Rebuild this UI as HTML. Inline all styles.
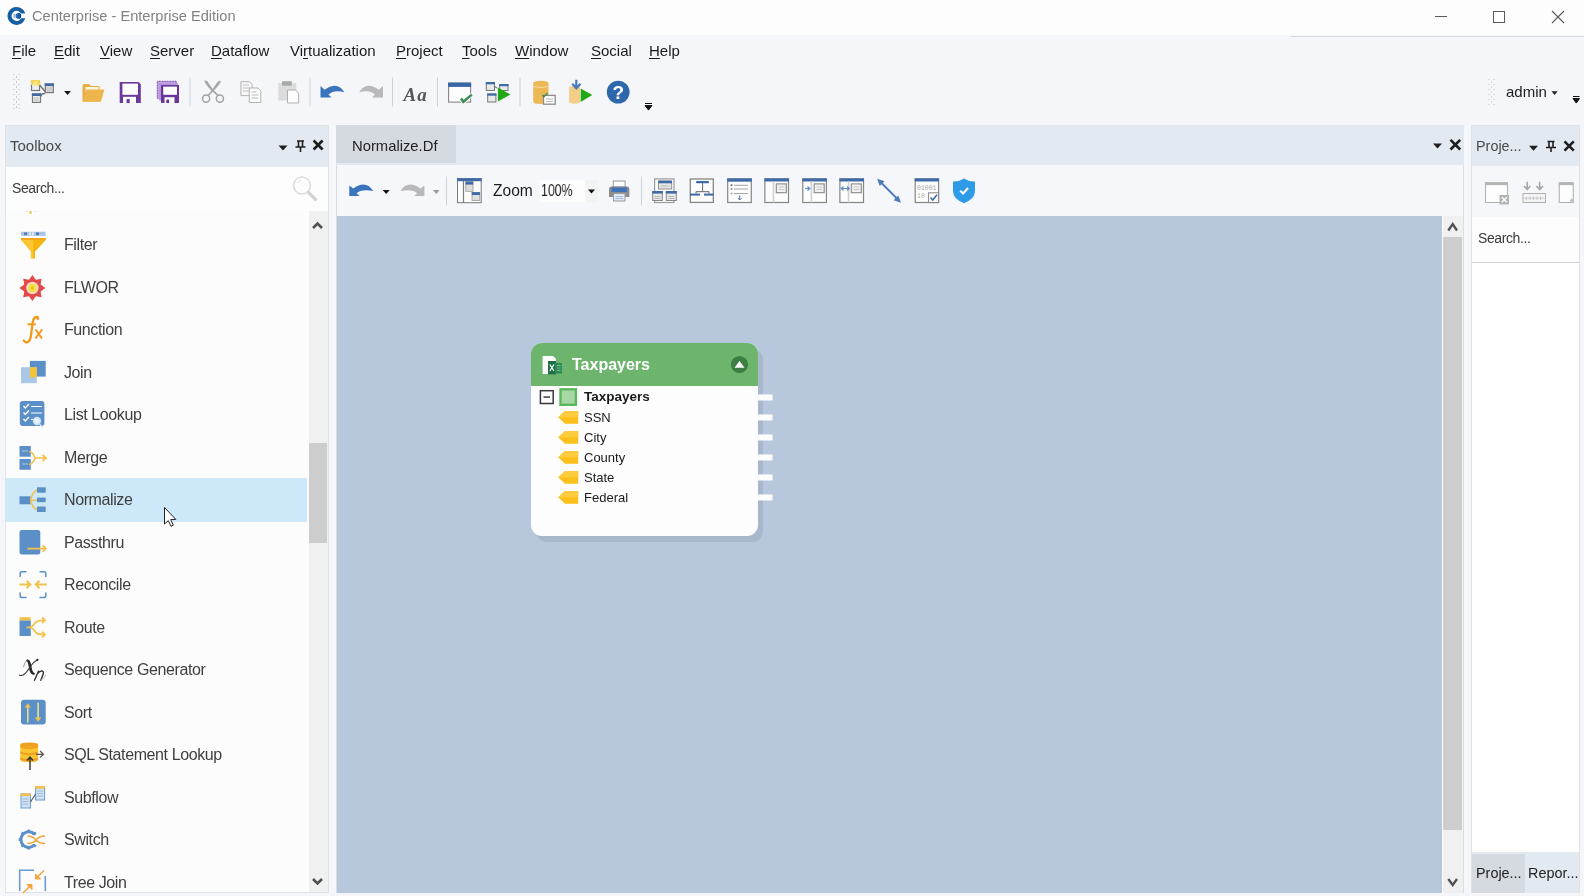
<!DOCTYPE html>
<html><head><meta charset="utf-8">
<style>
*{box-sizing:border-box;margin:0;padding:0}
html,body{width:1584px;height:896px;overflow:hidden}
body{position:relative;background:#f4f6f9;font-family:"Liberation Sans",sans-serif;color:#1e1e1e}
.a{position:absolute}
.t{position:absolute;white-space:nowrap;line-height:1;will-change:transform}
#title{left:0;top:0;width:1584px;height:35px;background:#fdfdfd}
.menu span{will-change:transform;position:absolute;top:43px;font-size:15px;color:#1a1a1a;line-height:1}
.menu u{text-decoration:underline;text-decoration-thickness:1px;text-underline-offset:2px}
.sep{position:absolute;width:1px;background:#c9ced6}
.li{will-change:transform;position:absolute;left:64px;font-size:16px;letter-spacing:-0.4px;color:#404040;line-height:1}
.ic{position:absolute}
</style></head><body>
<!-- title bar -->
<div id="title" class="a"></div>
<div class="a" style="left:1290px;top:36px;width:294px;height:1px;background:#d9dee5"></div>
<svg class="ic" style="left:4px;top:4px" width="26" height="24" viewBox="4 4 26 24">
  <path d="M25.2 13.6 A9 9 0 1 0 25.2 18.2 H21.2 A5.1 5.1 0 1 1 21.2 13.6 Z" fill="#155fa3"/>
  <circle cx="18.4" cy="15.9" r="2.8" fill="#1f6fb8"/>
  <path d="M18.4 13.1 A2.8 2.8 0 0 1 18.4 18.7 Z" fill="#0f4f92"/>
  <rect x="13.6" y="13.8" width="1.6" height="4" fill="#8ea9c8"/>
</svg>
<div class="t" style="left:32px;top:9px;font-size:14.6px;color:#828282">Centerprise - Enterprise Edition</div>
<!-- window controls -->
<div class="a" style="left:1435px;top:16px;width:12px;height:1px;background:#5a5a5a"></div>
<div class="a" style="left:1493px;top:11px;width:12px;height:12px;border:1px solid #5a5a5a"></div>
<svg class="ic" style="left:1551px;top:10px" width="14" height="14" viewBox="0 0 14 14"><path d="M1 1L13 13M13 1L1 13" stroke="#5a5a5a" stroke-width="1.1"/></svg>

<!-- menu -->
<div class="menu">
<span style="left:12px"><u>F</u>ile</span>
<span style="left:54px"><u>E</u>dit</span>
<span style="left:100px"><u>V</u>iew</span>
<span style="left:150px"><u>S</u>erver</span>
<span style="left:211px"><u>D</u>ataflow</span>
<span style="left:290px">Vi<u>r</u>tualization</span>
<span style="left:396px"><u>P</u>roject</span>
<span style="left:462px"><u>T</u>ools</span>
<span style="left:515px"><u>W</u>indow</span>
<span style="left:591px"><u>S</u>ocial</span>
<span style="left:649px"><u>H</u>elp</span>
</div>

<!-- main toolbar placeholder -->
<div id="tb"></div>
<div class="t" style="left:1506px;top:84px;font-size:15px;color:#222">admin</div>


<!-- Toolbox panel -->
<div class="a" style="left:5px;top:125px;width:324px;height:768px;background:#fcfcfc;border:1px solid #dfe3e8"></div>
<div class="a" style="left:6px;top:126px;width:322px;height:41px;background:#e2e9f1"></div>
<div class="t" style="left:10px;top:138px;font-size:15px;color:#4a4a4a">Toolbox</div>
<div class="a" style="left:6px;top:167px;width:322px;height:44px;background:#fdfdfd"></div>
<div class="t" style="left:12px;top:181px;font-size:14px;letter-spacing:-0.4px;color:#3a3a3a">Search...</div>

<!-- toolbox scrollbar -->
<div class="a" style="left:309px;top:211px;width:19px;height:681px;background:#f0f0f0"></div>
<div class="a" style="left:309px;top:443px;width:18px;height:100px;background:#cdcdcd"></div>

<!-- selection -->
<div class="a" style="left:6px;top:478px;width:301px;height:44px;background:#cde8f8"></div>

<div id="list">
<div class="li" style="top:237px">Filter</div>
<div class="li" style="top:280px">FLWOR</div>
<div class="li" style="top:322px">Function</div>
<div class="li" style="top:365px">Join</div>
<div class="li" style="top:407px">List Lookup</div>
<div class="li" style="top:450px">Merge</div>
<div class="li" style="top:492px">Normalize</div>
<div class="li" style="top:535px">Passthru</div>
<div class="li" style="top:577px">Reconcile</div>
<div class="li" style="top:620px">Route</div>
<div class="li" style="top:662px">Sequence Generator</div>
<div class="li" style="top:705px">Sort</div>
<div class="li" style="top:747px">SQL Statement Lookup</div>
<div class="li" style="top:790px">Subflow</div>
<div class="li" style="top:832px">Switch</div>
<div class="li" style="top:875px">Tree Join</div>
</div>

<!-- Document area -->
<div class="a" style="left:336px;top:125px;width:1128px;height:40px;background:#e3e9f0"></div>
<div class="a" style="left:336px;top:125px;width:120px;height:38px;background:#d5dae1"></div>
<div class="t" style="left:352px;top:139px;font-size:14.8px;color:#222">Normalize.Df</div>
<div class="a" style="left:336px;top:165px;width:1128px;height:728px;background:#f5f7fa;border-left:1px solid #d9dde3"></div>
<div class="a" style="left:337px;top:216px;width:1105px;height:677px;background:#b8c8dc"></div>
<div class="a" style="left:1442px;top:216px;width:1px;height:677px;background:#fff"></div>
<div class="a" style="left:1443px;top:216px;width:20px;height:677px;background:#f0f0f0"></div>
<div class="a" style="left:1463px;top:165px;width:1px;height:728px;background:#dadfe5"></div>
<div class="a" style="left:1443px;top:237px;width:19px;height:593px;background:#cdcdcd"></div>
<div class="t" style="left:493px;top:183px;font-size:15.6px;color:#1e1e1e">Zoom</div>
<div class="a" style="left:540px;top:180px;width:58px;height:22px;background:#fdfdfd"></div>
<div class="a" style="left:585px;top:180px;width:13px;height:22px;background:#f3f3f3"></div>
<div class="t" style="left:541px;top:183px;font-size:15.6px;color:#1e1e1e;transform:scaleX(0.79);transform-origin:0 0">100%</div>

<!-- Right panel -->
<div class="a" style="left:1471px;top:125px;width:109px;height:768px;background:#f5f7fa;border:1px solid #dfe3e8"></div>
<div class="a" style="left:1472px;top:126px;width:107px;height:40px;background:#e2e9f1"></div>
<div class="t" style="left:1476px;top:139px;font-size:14.4px;color:#4a4a4a">Proje...</div>
<div class="a" style="left:1472px;top:217px;width:107px;height:45px;background:#fdfdfd"></div>
<div class="a" style="left:1472px;top:262px;width:107px;height:1px;background:#d0d0d0"></div>
<div class="a" style="left:1472px;top:263px;width:107px;height:589px;background:#fff"></div>
<div class="t" style="left:1478px;top:231px;font-size:14px;letter-spacing:-0.4px;color:#3a3a3a">Search...</div>
<div class="a" style="left:1472px;top:852px;width:107px;height:41px;background:#e3e9f0"></div>
<div class="a" style="left:1472px;top:854px;width:53px;height:39px;background:#d5dae1"></div>
<div class="t" style="left:1476px;top:866px;font-size:14.4px;color:#222">Proje...</div>
<div class="t" style="left:1528px;top:866px;font-size:14.4px;color:#222">Repor...</div>

<!-- Node -->
<div class="a" style="left:536px;top:349px;width:227px;height:193px;border-radius:11px;background:#a8b7cb"></div>
<div class="a" style="left:531px;top:343px;width:227px;height:193px;border-radius:11px;background:#fdfdfd;overflow:hidden">
  <div class="a" style="left:0;top:0;width:227px;height:43px;background:#6db56d"></div>
</div>
<div class="t" style="left:572px;top:357px;font-size:16px;font-weight:bold;color:#fff">Taxpayers</div>
<div class="t" style="left:584px;top:390px;font-size:13.5px;font-weight:bold;color:#1a1a1a">Taxpayers</div>
<div class="t" style="left:584px;top:411px;font-size:13px;color:#1a1a1a">SSN</div>
<div class="t" style="left:584px;top:431px;font-size:13px;color:#1a1a1a">City</div>
<div class="t" style="left:584px;top:451px;font-size:13px;color:#1a1a1a">County</div>
<div class="t" style="left:584px;top:471px;font-size:13px;color:#1a1a1a">State</div>
<div class="t" style="left:584px;top:491px;font-size:13px;color:#1a1a1a">Federal</div>
<svg id="ov" class="a" style="left:0;top:0;z-index:5" width="1584" height="896" viewBox="0 0 1584 896">
<!-- ===== main toolbar ===== -->
<g fill="#b9bec6">
<rect x="13.5" y="74" width="1" height="1"/><rect x="18.5" y="74" width="1" height="1"/>
<rect x="16" y="76.5" width="1" height="1" fill="#9aa0a8"/>
<rect x="13.5" y="79" width="1" height="1"/><rect x="18.5" y="79" width="1" height="1"/>
<rect x="16" y="81.5" width="1" height="1" fill="#9aa0a8"/>
<rect x="13.5" y="84" width="1" height="1"/><rect x="18.5" y="84" width="1" height="1"/>
<rect x="16" y="86.5" width="1" height="1" fill="#9aa0a8"/>
<rect x="13.5" y="89" width="1" height="1"/><rect x="18.5" y="89" width="1" height="1"/>
<rect x="16" y="91.5" width="1" height="1" fill="#9aa0a8"/>
<rect x="13.5" y="94" width="1" height="1"/><rect x="18.5" y="94" width="1" height="1"/>
<rect x="16" y="96.5" width="1" height="1" fill="#9aa0a8"/>
<rect x="13.5" y="99" width="1" height="1"/><rect x="18.5" y="99" width="1" height="1"/>
<rect x="16" y="101.5" width="1" height="1" fill="#9aa0a8"/>
<rect x="13.5" y="104" width="1" height="1"/><rect x="18.5" y="104" width="1" height="1"/>
<rect x="16" y="106.5" width="1" height="1" fill="#9aa0a8"/>
<rect x="13.5" y="108" width="1" height="1"/><rect x="18.5" y="108" width="1" height="1"/>
</g>
<!-- new dataflow icon -->
<path d="M39.5 85 L46 92.5 M40 97 L42 94 L45 93.5" stroke="#777" stroke-width="1.6" fill="none"/>
<rect x="31.5" y="81.5" width="8" height="9" fill="#eee" stroke="#7a7a7a" stroke-width="1.2"/>
<path d="M31 80 h9 v5 h-9z" fill="#f2d55a"/>
<circle cx="35.5" cy="83.5" r="2.5" fill="#fbe77a"/>
<rect x="45.3" y="84" width="8" height="8.6" fill="#d8d8d8" stroke="#7a7a7a" stroke-width="1.2"/>
<rect x="44.7" y="83.4" width="9.2" height="2.6" fill="#3e6aa6"/>
<rect x="46.3" y="87.5" width="6" height="4" fill="#cfcfcf"/>
<rect x="32.5" y="94" width="8" height="8.4" fill="#eee" stroke="#7a7a7a" stroke-width="1.2"/>
<rect x="31.9" y="93.4" width="9.2" height="2.6" fill="#3e6aa6"/>
<rect x="34" y="97.5" width="5" height="1" fill="#bbb"/><rect x="34" y="99.5" width="5" height="1" fill="#bbb"/>
<path d="M64.2 91 h6.7 l-3.35 4z" fill="#111"/>
<!-- folder -->
<path d="M82.5 101.5 V85.5 Q82.5 84 84 84 H89 L91 86 H99.5 V101.5 Z" fill="#e7ad45"/>
<path d="M85.5 87 H98.5 V92 H85.5Z" fill="#fbf3dc"/>
<path d="M82.5 101.7 L86.3 89.5 H104.4 L100.9 101.7 Z" fill="#edb64c"/>
<!-- save -->
<path d="M119.7 81.9 H138.5 L140.8 84.2 V103.1 H119.7Z" fill="#6c3899"/>
<rect x="122.4" y="83.6" width="15.6" height="11.2" fill="#fdfcff"/>
<rect x="123" y="96.8" width="13" height="6.3" fill="#fdfcff"/>
<rect x="126.6" y="99" width="3.1" height="4.1" fill="#6c3899"/>
<!-- save all -->
<rect x="157.3" y="81.3" width="19" height="17" fill="#c3a6e2" stroke="#6f3d9e" stroke-width="1" stroke-dasharray="1 0.6"/>
<rect x="159" y="83" width="19" height="17.5" fill="#b995dd"/>
<rect x="161" y="85" width="18" height="18" fill="#6a3598"/>
<rect x="163.2" y="86.6" width="13.8" height="8.2" fill="#fdfcff"/>
<rect x="164.5" y="97.2" width="10" height="5.8" fill="#fdfcff"/>
<rect x="166.3" y="99.6" width="2.8" height="3.4" fill="#6a3598"/>
<!-- separators -->
<rect x="189.5" y="77.5" width="1" height="29" fill="#cdd1d8"/>
<rect x="309.5" y="77.5" width="1" height="29" fill="#cdd1d8"/>
<rect x="392" y="77.5" width="1" height="29" fill="#cdd1d8"/>
<rect x="437" y="77.5" width="1" height="29" fill="#cdd1d8"/>
<rect x="519.5" y="77.5" width="1" height="29" fill="#cdd1d8"/>
<!-- scissors -->
<path d="M204.3 80.6 Q206 80 207.5 81.5 L213 89.5 L218.6 95 L217.6 96.2 L211.8 91 Q205 84 204.3 80.6Z" fill="#a3a3a3"/>
<path d="M220.9 80.9 Q219.2 80.3 217.7 81.8 L212.2 89.5 L207.6 95 L208.6 96.2 L213.4 91 Q220.2 84 220.9 80.9Z" fill="#a8a8a8"/>
<circle cx="206.1" cy="98.6" r="3.6" fill="none" stroke="#a3a3a3" stroke-width="1.5"/>
<circle cx="219.9" cy="98.6" r="3.6" fill="none" stroke="#a3a3a3" stroke-width="1.5"/>
<!-- copy -->
<path d="M240.9 81.7 H249.5 L252.2 84.4 V95.6 H240.9Z" fill="#f6f6f6" stroke="#b3b3b3" stroke-width="1"/>
<path d="M243 85 h6 M243 88 h7 M243 91 h7" stroke="#c2c2c2" stroke-width="1"/>
<path d="M249.3 88 H258 L260.8 90.8 V102.5 H249.3Z" fill="#fdfdfd" stroke="#b3b3b3" stroke-width="1"/>
<path d="M251.5 92 h5 M251.5 95 h7 M251.5 98 h7" stroke="#b8b8b8" stroke-width="1"/>
<!-- paste -->
<rect x="278.3" y="83" width="18" height="17.6" fill="#dcdcdc"/>
<rect x="282" y="81.2" width="9.8" height="4.5" fill="#a9a9a9"/>
<path d="M287.5 90 H295.5 L298.6 93.1 V103 H287.5Z" fill="#fdfdfd" stroke="#b0b0b0" stroke-width="1"/>
<!-- undo / redo -->
<path d="M320.5 86 V97.6 H331.6 L328.4 94.6 Q334 89.2 344.4 92.2 Q337.5 80.5 324.6 89.8 Z" fill="#3a74bd"/>
<path d="M383 86 V97.6 H371.9 L375.1 94.6 Q369.5 89.2 359.1 92.2 Q366 80.5 378.9 89.8 Z" fill="#b9b9b9"/>
<!-- Aa -->
<text x="403.5" y="100.8" font-family="Liberation Serif" font-style="italic" font-weight="bold" font-size="19" fill="#585858" letter-spacing="1">Aa</text>
<!-- window check -->
<rect x="448.6" y="83.1" width="22" height="19" fill="#fdfdfd" stroke="#858585" stroke-width="1.1"/>
<rect x="448.1" y="82.6" width="23" height="4.3" fill="#3866a6"/>
<path d="M461 98.5 L463.3 101.8 L471.8 94.6" stroke="#fdfdfd" stroke-width="4.5" fill="none"/>
<path d="M461 98.5 L463.3 101.8 L471.8 94.6" stroke="#3d8c57" stroke-width="2.5" fill="none"/>
<!-- run -->
<rect x="486.3" y="82.6" width="8.2" height="7.8" fill="#e9e9e9" stroke="#777" stroke-width="1"/>
<rect x="485.8" y="82.1" width="9.2" height="2.2" fill="#3e6aa6"/>
<rect x="499.7" y="84.5" width="8.3" height="6" fill="#e9e9e9" stroke="#777" stroke-width="1"/>
<rect x="499.2" y="84" width="9.3" height="2.2" fill="#3e6aa6"/>
<rect x="487.7" y="94" width="8.2" height="8" fill="#e9e9e9" stroke="#777" stroke-width="1"/>
<rect x="487.2" y="93.5" width="9.2" height="2.2" fill="#3e6aa6"/>
<path d="M494.5 86.5 L497 88" stroke="#777" stroke-width="1.2"/>
<path d="M497.9 87.6 V101.5 L510.4 94.4Z" fill="#22a814"/>
<!-- db window -->
<path d="M533.2 83.5 Q533.2 80.8 540.8 80.8 Q548.5 80.8 548.5 83.5 V101.5 Q548.5 104 540.8 104 Q533.2 104 533.2 101.5Z" fill="#edb957"/>
<path d="M533.5 86.5 Q540.8 88.5 548.2 86.5" stroke="#f8dca0" stroke-width="1" fill="none"/>
<rect x="543.5" y="95.4" width="11.7" height="8.8" fill="#fdfdfd" stroke="#8c8c8c" stroke-width="1.3"/>
<path d="M546 99 h7 M546 101.5 h7" stroke="#bbb" stroke-width="1"/>
<path d="M542.5 95 L544 96.8 L547.5 93" stroke="#3d8c57" stroke-width="1.3" fill="none"/>
<!-- db run -->
<path d="M569.1 88 Q569.1 85.8 574.5 85.8 Q580 85.8 580 88 V101.5 Q580 103.5 574.5 103.5 Q569.1 103.5 569.1 101.5Z" fill="#f2ce86"/>
<path d="M576.3 79.7 V87 M572.3 83.8 L576.3 88.3 L580.5 83.8" stroke="#4878bd" stroke-width="2.2" fill="none"/>
<path d="M580.7 88.5 V102 L592.3 95.1Z" fill="#22a814"/>
<!-- help -->
<circle cx="618.2" cy="92.1" r="11.4" fill="#2f67ad"/>
<text x="618.2" y="99.2" text-anchor="middle" font-family="Liberation Sans" font-weight="bold" font-size="19" fill="#fff">?</text>
<!-- overflow -->
<path d="M645 103.5 h7 M645 105.6 h7 l-3.5 4.5z" stroke="#111" stroke-width="1" fill="#111"/>
<!-- right grip + admin -->
<g fill="#c2c6cc">
<rect x="1488.5" y="79" width="1" height="1"/><rect x="1493.5" y="79" width="1" height="1"/>
<rect x="1491" y="81.5" width="1" height="1"/>
<rect x="1488.5" y="84" width="1" height="1"/><rect x="1493.5" y="84" width="1" height="1"/>
<rect x="1491" y="86.5" width="1" height="1"/>
<rect x="1488.5" y="89" width="1" height="1"/><rect x="1493.5" y="89" width="1" height="1"/>
<rect x="1491" y="91.5" width="1" height="1"/>
<rect x="1488.5" y="94" width="1" height="1"/><rect x="1493.5" y="94" width="1" height="1"/>
<rect x="1491" y="96.5" width="1" height="1"/>
<rect x="1488.5" y="99" width="1" height="1"/><rect x="1493.5" y="99" width="1" height="1"/>
<rect x="1491" y="101.5" width="1" height="1"/>
<rect x="1488.5" y="104" width="1" height="1"/><rect x="1493.5" y="104" width="1" height="1"/>
</g>
<path d="M1551.5 91.2 h6.2 l-3.1 3.8z" fill="#222"/>
<path d="M1573 96.5 h6.5 M1573 98.6 h6.5 l-3.25 4.5z" stroke="#111" stroke-width="1" fill="#111"/>
<!-- ===== toolbox icons ===== -->
<!-- partial icon at top -->
<rect x="29.5" y="211" width="2" height="3" fill="#e8c64a"/>
<rect x="26" y="211" width="1" height="1" fill="#c9d6e6"/><rect x="35" y="211" width="1" height="1" fill="#c9d6e6"/>
<!-- Filter -->
<g>
<rect x="21" y="231.8" width="24.6" height="4" fill="#a9c4e2"/>
<rect x="24" y="232.4" width="3" height="2.8" fill="#4f7fba"/><rect x="36" y="232.4" width="3" height="2.8" fill="#4f7fba"/>
<rect x="29.5" y="232.4" width="1.2" height="2.8" fill="#fff"/><rect x="32.3" y="232.4" width="1.2" height="2.8" fill="#fff"/>
<path d="M21 238 H45.6 V240 L35 251.5 V258.5 H30.8 V251.5 L21 240Z" fill="#fac532"/>
<path d="M33.3 238 H45.6 V240 L35 251.5 V258.5 H33.3Z" fill="#f6b40f"/>
<path d="M21 238 H45.6 V240 H21Z" fill="#f2a81a"/>
</g>
<!-- FLWOR -->
<g transform="translate(32.4 288)">
<path d="M0,-13 L3.4,-8.2 L9.2,-9.2 L8.2,-3.4 L13,0 L8.2,3.4 L9.2,9.2 L3.4,8.2 L0,13 L-3.4,8.2 L-9.2,9.2 L-8.2,3.4 L-13,0 L-8.2,-3.4 L-9.2,-9.2 L-3.4,-8.2Z" fill="#e24a4a"/>
<circle r="6.2" fill="#f6d8c8"/>
<circle r="4.2" fill="#f7e23a"/>
<circle r="1.6" fill="#f0b830"/>
</g>
<!-- Function -->
<path d="M23.8 340.5 Q25.5 343.5 28.3 341.8 Q30.4 340.3 31 335 L32.8 322 Q33.8 316.8 37 317 Q38.6 317.3 37.7 319" stroke="#f39a1e" stroke-width="2.3" fill="none" stroke-linecap="round"/>
<path d="M27.5 324.3 H35.8" stroke="#f39a1e" stroke-width="2"/>
<path d="M36 330 L41.5 337.8 M41.8 330 L35.8 337.8" stroke="#f39a1e" stroke-width="2" stroke-linecap="round"/>
<!-- Join -->
<rect x="29.9" y="360.9" width="15.8" height="15.7" fill="#5b8fc7"/>
<rect x="21" y="367.2" width="15.8" height="16" fill="#a9c8e6"/>
<rect x="29.9" y="367.2" width="6.9" height="10.2" fill="#f5c338"/>
<!-- List Lookup -->
<rect x="19.8" y="400.9" width="24.6" height="25.2" rx="3" fill="#5b8fc7"/>
<path d="M23.5 406 L25.3 408 L29 404 M23.5 412.5 L25.3 414.5 L29 410.5 M23.5 419 L25.3 421 L29 417" stroke="#fff" stroke-width="1.4" fill="none"/>
<path d="M31 406.5 H42 M31 413 H42 M31 419.5 H33" stroke="#fff" stroke-width="1.2"/>
<circle cx="37" cy="421" r="4.2" fill="#cfe3f5"/>
<circle cx="37" cy="421" r="2.5" fill="#e9f3fb"/>
<path d="M39.5 424 L42.5 427" stroke="#cfe3f5" stroke-width="1.4"/>
<!-- Merge -->
<rect x="19.5" y="446" width="11.3" height="10.7" fill="#5b8fc7"/>
<rect x="19.5" y="459" width="11.3" height="10.75" fill="#5b8fc7"/>
<path d="M22 451 h6 M22 464 h6" stroke="#a9c8e6" stroke-width="1"/>
<path d="M29 451.5 Q33 452 35 458 Q33 464 29 464.5 M35 458 H45" stroke="#f2c14a" stroke-width="1.6" fill="none"/>
<path d="M42.5 455 L46.2 458 L42.5 461" stroke="#f2c14a" stroke-width="1.7" fill="none"/>
<!-- Normalize -->
<rect x="19.5" y="496.3" width="11" height="8" fill="#5b8fc7"/>
<rect x="37" y="487.3" width="8.7" height="5.4" fill="#5b8fc7"/>
<rect x="37" y="497.6" width="8.7" height="4.6" fill="#5b8fc7"/>
<rect x="37" y="506.5" width="8.7" height="5.5" fill="#5b8fc7"/>
<path d="M30.5 500.3 Q33 491 37 490 M30.5 500.3 H37 M30.5 500.3 Q33 509.5 37 509.3" stroke="#f2c14a" stroke-width="1.5" fill="none"/>
<!-- Passthru -->
<rect x="19.5" y="529.9" width="20.8" height="24.7" rx="2.5" fill="#5b8fc7"/>
<path d="M27.4 548.6 H45" stroke="#f2c14a" stroke-width="1.8"/>
<path d="M42.5 545.5 L46 548.6 L42.5 551.7" stroke="#f2c14a" stroke-width="1.8" fill="none"/>
<!-- Reconcile -->
<path d="M20.2 577 V573.5 Q20.2 571.8 22 571.8 H26.5 M39.5 571.8 H44 Q45.8 571.8 45.8 573.5 V577 M45.8 592.5 V595.8 Q45.8 597.6 44 597.6 H39.5 M26.5 597.6 H22 Q20.2 597.6 20.2 595.8 V592.5" stroke="#5b8fc7" stroke-width="1.5" fill="none"/>
<path d="M19.5 584.5 H30 M26.5 580.8 L30.3 584.5 L26.5 588.2 M46.6 584.5 H36 M39.5 580.8 L35.7 584.5 L39.5 588.2" stroke="#f2c14a" stroke-width="2" fill="none"/>
<!-- Route -->
<rect x="19.5" y="620.3" width="11.3" height="15.7" fill="#5b8fc7"/>
<rect x="19.5" y="617.2" width="11.3" height="3.1" fill="#f2c14a"/>
<path d="M26.5 627.4 H29.5 Q32 627.4 35 623 Q37 620.3 44 620.3 M29.5 627.4 Q32 627.4 35 631.5 Q37 634.6 44 634.6" stroke="#f2c14a" stroke-width="1.8" fill="none"/>
<path d="M42 617.5 L45 620.3 L42 623.1 M42 631.8 L45 634.6 L42 637.4" stroke="#f2c14a" stroke-width="1.8" fill="none"/>
<!-- Sequence generator -->
<path d="M23.5 666.5 Q24.5 661.5 27.5 660" stroke="#999" stroke-width="1" fill="none" stroke-linecap="round"/>
<path d="M26.8 659.6 Q29.8 659.2 31 664 L32.2 670 Q33 673 35.2 673.8 L34.6 674.6 Q30.8 675 29.6 671 L28.4 665 Q27.8 661.5 26.2 660.6Z" fill="#2a2a2a"/>
<path d="M37.6 659.8 Q33 662 30 667 Q26.5 673 23 675 Q21 676 19.5 675.2" stroke="#3a3a3a" stroke-width="1.1" fill="none" stroke-linecap="round"/>
<circle cx="37.4" cy="659.8" r="1.1" fill="#222"/>
<path d="M34.5 680.3 L38.5 671.2 M37.6 673.5 Q40 670.5 42.5 671 Q44 671.8 43.2 674 L40.8 680.3" stroke="#333" stroke-width="1.4" fill="none" stroke-linecap="round"/>
<path d="M41 680 Q43 679.5 46 675" stroke="#aaa" stroke-width="0.9" fill="none"/>
<!-- Sort -->
<rect x="21" y="699.8" width="24.7" height="24.6" rx="3" fill="#5b8fc7"/>
<path d="M27.8 706 V722.5 M38.1 702.5 V719" stroke="#e9dc8c" stroke-width="1.6"/>
<path d="M24.6 707.5 L27.8 703.3 L31 707.5Z M34.9 717.5 L38.1 721.8 L41.3 717.5Z" fill="#f2c14a"/>
<!-- SQL -->
<path d="M20.25 745 Q20.25 742.7 29.2 742.7 Q38.1 742.7 38.1 745 V759.8 Q38.1 762.3 29.2 762.3 Q20.25 762.3 20.25 759.8Z" fill="#f7c631"/>
<path d="M20.25 745 Q29.2 748.5 38.1 745 V747.5 Q29.2 751 20.25 747.5Z M20.25 751.5 Q29.2 755 38.1 751.5 V753.5 Q29.2 757 20.25 753.5Z M20.25 757.5 Q29.2 761 38.1 757.5 V759.8 Q29.2 763 20.25 759.8Z" fill="#f0a020"/>
<ellipse cx="29.2" cy="744.5" rx="8.9" ry="2" fill="#f0a020"/>
<path d="M30 770 V757.5 M27 760.5 L30 757 L33 760.5" stroke="#333" stroke-width="1.4" fill="none"/>
<path d="M36 754.3 H43 M40 751 L43.5 754.3 L40 757.6" stroke="#555" stroke-width="1.2" fill="none"/>
<!-- Subflow -->
<rect x="21" y="794" width="9.5" height="14" fill="#cfe0f2" stroke="#6b9bd0" stroke-width="1"/>
<rect x="20.7" y="793.4" width="10" height="2.6" fill="#f2c14a"/>
<path d="M22.5 799 h6 M22.5 801.5 h6 M22.5 804 h6" stroke="#8fb2d9" stroke-width="0.8"/>
<rect x="35.6" y="786.5" width="9" height="13.5" fill="#cfe0f2" stroke="#6b9bd0" stroke-width="1"/>
<rect x="35.4" y="786" width="9.4" height="2.6" fill="#f2c14a"/>
<path d="M37 791 h6 M37 793.5 h6 M37 796 h6" stroke="#8fb2d9" stroke-width="0.8"/>
<path d="M30.5 802 L35.6 794" stroke="#555" stroke-width="1.1"/>
<!-- Switch -->
<g transform="translate(28.7 839.6)">
<path d="M5.8,-5.2 A7.8 7.8 0 1 0 5.8 5.2" stroke="#5b8fc7" stroke-width="3" fill="none"/>
<g fill="#5b8fc7">
<rect x="-1.3" y="-10" width="2.6" height="3"/><rect x="-1.3" y="7" width="2.6" height="3"/>
<rect x="-10" y="-1.3" width="3" height="2.6"/>
<rect x="-1.3" y="-10" width="2.6" height="3" transform="rotate(45)"/><rect x="-1.3" y="-10" width="2.6" height="3" transform="rotate(-45)"/>
<rect x="-1.3" y="7" width="2.6" height="3" transform="rotate(45)"/><rect x="-1.3" y="7" width="2.6" height="3" transform="rotate(-45)"/>
</g>
</g>
<path d="M27.5 836 Q33 836 36 840 Q39 843.5 45 843.5 M27.5 843.5 Q33 843.5 36 840 Q39 836 45 836" stroke="#f0a63a" stroke-width="1.6" fill="none"/>
<!-- Tree Join -->
<path d="M19.7 891 V870.2 H34" stroke="#6b9bd0" stroke-width="1.6" fill="none"/>
<path d="M45.3 876 V891" stroke="#6b9bd0" stroke-width="1.6"/>
<path d="M23 893 L31 885 M44 870.5 L36 878.5" stroke="#f3a43a" stroke-width="1.5"/>
<path d="M27 884.5 H32 V889.5Z M40.5 879 H35.5 V874Z" fill="#f3a43a" stroke="#f3a43a" stroke-width="1"/>
<!-- toolbox header icons -->
<path d="M278.5 145.5 h9 l-4.5 5z" fill="#1e1e1e"/>
<path d="M297 141 h7 M298.5 141 v6 h4 v-6 M295.5 147 h10 M300.5 147 v5" stroke="#1e1e1e" stroke-width="1.6" fill="none"/>
<path d="M313.6 140.5 L322.6 149.5 M322.6 140.5 L313.6 149.5" stroke="#1e1e1e" stroke-width="2.6"/>
<!-- search magnifier -->
<circle cx="302" cy="185.5" r="8.5" fill="none" stroke="#dcdcdc" stroke-width="1.6"/>
<path d="M297.5 183 Q298.5 180.5 301 180" stroke="#e6e6e6" stroke-width="1.2" fill="none"/>
<path d="M308.5 192.5 L315.5 199.5" stroke="#d3d3d3" stroke-width="3.2" stroke-linecap="round"/>
<!-- toolbox scroll arrows -->
<path d="M313 228 L317.5 223.5 L322 228" stroke="#505050" stroke-width="2.6" fill="none"/>
<path d="M313 879 L317.5 883.5 L322 879" stroke="#505050" stroke-width="2.6" fill="none"/>
<!-- cursor -->
<path d="M164.5 507.5 V524 L168.3 520.6 L171 526.3 L173.3 525.2 L170.7 519.6 L175.8 519.4 Z" fill="#fff" stroke="#222" stroke-width="1" stroke-linejoin="miter"/>
<!-- ===== doc tab strip icons ===== -->
<path d="M1433 143.5 h9 l-4.5 5z" fill="#1e1e1e"/>
<path d="M1450.5 139.8 L1460.2 149.5 M1460.2 139.8 L1450.5 149.5" stroke="#1e1e1e" stroke-width="2.6"/>
<!-- ===== doc toolbar ===== -->
<path d="M349.3 185.5 V196 H359.5 L356.5 193.2 Q361.5 188.5 373.2 191 Q366 179.5 353.2 188.4 Z" fill="#3a74bd"/>
<path d="M382.7 190 h7 l-3.5 4z" fill="#111"/>
<path d="M424.4 185.5 V196 H414.2 L417.2 193.2 Q412.2 188.5 400.4 191 Q407.6 179.5 420.5 188.4 Z" fill="#b9b9b9"/>
<path d="M433 190 h6.5 l-3.25 4z" fill="#999"/>
<path d="M588 189.6 h7 l-3.5 3.9z" fill="#111"/>
<rect x="446" y="176.5" width="1" height="29" fill="#cdd1d8"/>
<!-- layout icon -->
<rect x="457.5" y="178.7" width="23.7" height="24" fill="#fdfdfd" stroke="#7a7a7a" stroke-width="1"/>
<rect x="457" y="178.2" width="24.7" height="3" fill="#3e6aa6"/>
<path d="M463.5 181 V203" stroke="#7a7a7a" stroke-width="1.2"/>
<rect x="465.8" y="181.8" width="7.2" height="9.5" fill="#dedede" stroke="#999" stroke-width="0.8"/>
<rect x="465.6" y="181.6" width="7.6" height="3" fill="#3e6aa6"/>
<rect x="472" y="192.4" width="7.8" height="8" fill="#dedede" stroke="#999" stroke-width="0.8"/>
<rect x="471.8" y="192.2" width="8.2" height="2.8" fill="#3e6aa6"/>
<!-- printer -->
<rect x="613.3" y="181" width="11.8" height="6" fill="#fdfdfd" stroke="#9a9a9a" stroke-width="1"/>
<path d="M609 189 Q609 186.5 611.5 186.5 H626.9 Q629.4 186.5 629.4 189 V197 H609Z" fill="#8c8c8c"/>
<rect x="611.5" y="187.5" width="15.5" height="4.5" fill="#3f74bb"/>
<rect x="613.5" y="193.5" width="11.5" height="7.5" fill="#dfe9f5" stroke="#999" stroke-width="1"/>
<path d="M615.5 196.5 h7.5 M615.5 198.5 h7.5" stroke="#8fb0d8" stroke-width="0.8"/>
<rect x="641" y="176.5" width="1" height="29" fill="#cdd1d8"/>
<!-- icon 1 -->
<rect x="654.6" y="178.9" width="19.4" height="23.6" fill="#fdfdfd" stroke="#9a9a9a" stroke-width="1.2"/>
<rect x="658.5" y="181" width="13.2" height="8" fill="#e6e6e6" stroke="#888" stroke-width="0.9"/>
<rect x="658.3" y="180.7" width="13.6" height="2.6" fill="#3e6aa6"/>
<path d="M660.5 186 h9" stroke="#aaa" stroke-width="0.8"/>
<rect x="652.7" y="191.5" width="9.6" height="9" fill="#e9e9e9" stroke="#888" stroke-width="1"/>
<rect x="652.2" y="191" width="10.6" height="2.6" fill="#3e6aa6"/>
<rect x="666.3" y="191.5" width="10" height="9" fill="#e9e9e9" stroke="#888" stroke-width="1"/>
<rect x="665.8" y="191" width="11" height="2.6" fill="#3e6aa6"/>
<path d="M654.5 196.5 h6 M654.5 198.5 h6 M668.3 196.5 h6 M668.3 198.5 h6" stroke="#aaa" stroke-width="0.8"/>
<!-- icon 2 -->
<rect x="690.3" y="179" width="23" height="23.4" fill="#fdfdfd" stroke="#858585" stroke-width="1.3"/>
<rect x="696" y="181" width="13" height="2.2" rx="1" fill="#3e6aa6"/>
<path d="M702.6 183 V191.7 M696 191.7 H709 V193.6 M696 191.7 V193.6" stroke="#666" stroke-width="1" fill="none"/>
<rect x="690" y="193.6" width="10" height="2" fill="#3e6aa6"/>
<rect x="704" y="193.6" width="9.6" height="2" fill="#3e6aa6"/>
<!-- icon 3 -->
<rect x="727.7" y="178.9" width="23.6" height="23.6" fill="#fdfdfd" stroke="#858585" stroke-width="1.2"/>
<rect x="727.2" y="178.4" width="24.6" height="3.3" fill="#3e6aa6"/>
<circle cx="731.5" cy="185.3" r="1" fill="#666"/><circle cx="731.5" cy="189" r="1" fill="#888"/><circle cx="731.5" cy="193.6" r="1" fill="#aaa"/>
<path d="M734 185.3 H748 M734 189 H748 M734 193.6 H748" stroke="#999" stroke-width="0.9"/>
<path d="M739.7 195.5 V199.8 M737.8 198 L739.7 200 L741.6 198" stroke="#4a7ab8" stroke-width="1" fill="none"/>
<!-- icons 4,5,6 -->
<g id="pv">
<rect x="764.9" y="178.9" width="23.6" height="23.6" fill="#fdfdfd" stroke="#858585" stroke-width="1.2"/>
<rect x="764.4" y="178.4" width="24.6" height="3.1" fill="#3e6aa6"/>
<path d="M773.5 181.5 V202.5" stroke="#d0d0d0" stroke-width="1.6"/>
<rect x="776.3" y="183.9" width="10" height="8.8" fill="#f2f2f2" stroke="#888" stroke-width="1.1"/>
<path d="M778.5 187 h6 M778.5 189.5 h6" stroke="#bbb" stroke-width="0.8"/>
</g>
<use href="#pv" x="37.9"/>
<use href="#pv" x="75"/>
<path d="M805 188.5 H809.5 M807.5 186.5 L809.8 188.5 L807.5 190.5" stroke="#5a8ac8" stroke-width="1.2" fill="none"/>
<path d="M841.5 188.5 H849 M843.5 186.5 L841.3 188.5 L843.5 190.5 M847 186.5 L849.2 188.5 L847 190.5" stroke="#5a8ac8" stroke-width="1.2" fill="none"/>
<!-- line icon -->
<path d="M879.5 181 L898.8 200.4" stroke="#4a7ab8" stroke-width="2"/>
<path d="M877.2 178.8 L884.5 181.3 L879.7 186Z M901 202.7 L898.3 195.5 L893.6 200.2Z" fill="#4a7ab8"/>
<!-- icon 8 -->
<rect x="915.2" y="178.9" width="23.4" height="23.6" fill="#fdfdfd" stroke="#858585" stroke-width="1.2"/>
<rect x="914.7" y="178.4" width="24.2" height="3.1" fill="#3e6aa6"/>
<text x="917" y="189.5" font-family="Liberation Mono" font-size="6.5" fill="#aaa">01001</text>
<text x="917" y="198" font-family="Liberation Mono" font-size="6.5" fill="#aaa">10</text>
<rect x="928.6" y="192.8" width="10" height="9.8" fill="#fdfdfd" stroke="#858585" stroke-width="1"/>
<path d="M930.5 197.5 L932.8 200 L937 194.8" stroke="#3e6aa6" stroke-width="1.5" fill="none"/>
<!-- shield -->
<path d="M964 178.4 Q959 181.8 953 181.5 V191 Q953 199 964 203.2 Q975 199 975 191 V181.5 Q969 181.8 964 178.4Z" fill="#2e9be7"/>
<path d="M960.2 190.8 L963 193.5 L968 188" stroke="#fff" stroke-width="2" fill="none"/>
<!-- canvas scrollbar arrows -->
<path d="M1448.3 230.5 L1452.7 224 L1457 230.5" stroke="#505050" stroke-width="2.3" fill="none"/>
<path d="M1448.3 879 L1452.7 885 L1457 879" stroke="#505050" stroke-width="2.3" fill="none"/>
<!-- ===== right panel ===== -->
<path d="M1529 145.8 h9 l-4.5 5z" fill="#1e1e1e"/>
<path d="M1547.5 141.5 h7 M1549 141.5 v6 h4 v-6 M1546 147.5 h10 M1551 147.5 v4.5" stroke="#1e1e1e" stroke-width="1.6" fill="none"/>
<path d="M1564.5 141.3 L1573.8 150.6 M1573.8 141.3 L1564.5 150.6" stroke="#1e1e1e" stroke-width="2.6"/>
<rect x="1485.5" y="183" width="22" height="19.5" fill="#fdfdfd" stroke="#b3b3b3" stroke-width="1.1"/>
<rect x="1485" y="182.3" width="23" height="2.8" fill="#b3b3b3"/>
<rect x="1499.5" y="195" width="9.5" height="9.4" fill="#b3b3b3"/>
<path d="M1501.8 197.3 L1506.8 202.2 M1506.8 197.3 L1501.8 202.2" stroke="#fff" stroke-width="1.4"/>
<path d="M1527.2 181.7 V189 M1524 186 L1527.2 189.5 L1530.4 186 M1539.7 181.7 V189 M1536.5 186 L1539.7 189.5 L1542.9 186" stroke="#a8a8a8" stroke-width="1.6" fill="none"/>
<rect x="1523" y="193.5" width="22.5" height="9" fill="#f4f4f4" stroke="#b0b0b0" stroke-width="1"/>
<path d="M1526.5 196.5 V200 M1530 196.5 V200 M1533.5 196.5 V200 M1537 196.5 V200 M1540.5 196.5 V200 M1524 198.2 H1544.5" stroke="#c2c2c2" stroke-width="0.8"/>
<rect x="1559.3" y="183" width="14" height="19.5" fill="#fdfdfd" stroke="#b3b3b3" stroke-width="1.1"/>
<rect x="1558.8" y="182.3" width="14.5" height="2.8" fill="#b3b3b3"/>
<path d="M1572 198 L1569.5 201.5 H1573Z" fill="#b3b3b3"/>
<!-- ===== node ===== -->
<path d="M542.6 356 H553 L556 359 V374 H542.6Z" fill="#fdfdfd"/>
<rect x="548" y="361" width="8" height="13.4" fill="#1d7043"/>
<rect x="555" y="363" width="6.9" height="10.5" fill="#2a8a55"/>
<path d="M557 365.5 h3.5 M557 368 h3.5 M557 370.5 h3.5" stroke="#9fd0b0" stroke-width="0.7"/>
<path d="M549.8 364.5 L554 371 M554 364.5 L549.8 371" stroke="#fff" stroke-width="1.3"/>
<circle cx="739.5" cy="364.5" r="8.6" fill="#3d7f42"/>
<path d="M734.5 367.7 L739.5 361 L744.5 367.7Z" fill="#fff"/>
<rect x="540.4" y="390.7" width="12.8" height="12.8" fill="#fdfdfd" stroke="#3a3a3a" stroke-width="1.5"/>
<path d="M543.5 397.1 H550" stroke="#3a3a3a" stroke-width="1.5"/>
<rect x="560.5" y="389.3" width="15.4" height="15.5" fill="#a6d8a6" stroke="#5cb85c" stroke-width="2.4"/>
<g id="tag"><path d="M558.2 417.3 L565 410.9 H578.2 V423.8 H565Z" fill="#fbbf1a"/><path d="M558.2 417.3 L565 410.9 H578.2 V417.3Z" fill="#fccc3e"/></g>
<use href="#tag" y="20"/><use href="#tag" y="40"/><use href="#tag" y="60"/><use href="#tag" y="80"/>
<g fill="#fdfdfd">
<rect x="758" y="394.5" width="14.5" height="6"/><rect x="758" y="414.5" width="14.5" height="6"/><rect x="758" y="434.5" width="14.5" height="6"/>
<rect x="758" y="454.5" width="14.5" height="6"/><rect x="758" y="474.5" width="14.5" height="6"/><rect x="758" y="494.5" width="14.5" height="6"/>
</g>
</svg>
</body></html>
